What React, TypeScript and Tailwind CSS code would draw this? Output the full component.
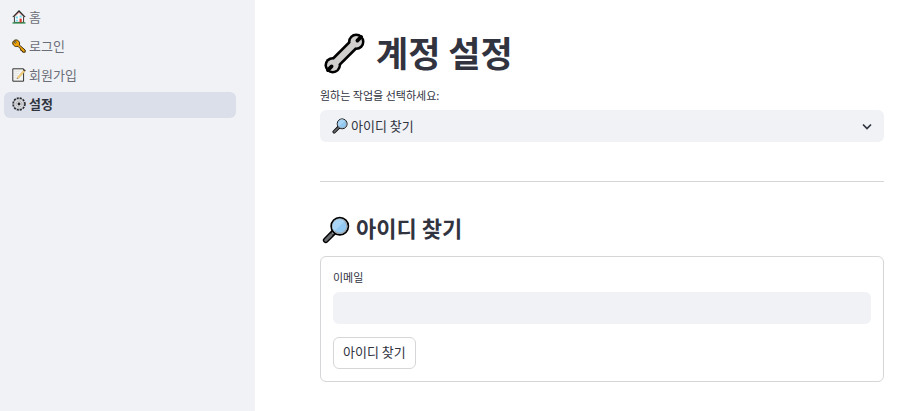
import type { ReactNode } from "react";

type IconProps = { className?: string };

function HouseIcon({ className }: IconProps) {
  return (
    <svg viewBox="0 0 26 26" className={className} aria-hidden="true">
      <path d="M4.500 11.500 13 3l8.500 8.500V23h-17z" fill="#fbfbfc" stroke="#2a2a2a" strokeWidth="1.700" />
      <path d="M5 12.500 13 4.500l8 8" fill="none" stroke="#e27a6b" strokeWidth="1.400" />
      <path d="M1.500 13 13 1.500 24.500 13" fill="none" stroke="#222" strokeWidth="1.900" />
      <path d="M1 24h24" stroke="#2f8a4e" strokeWidth="2.600" />
      <path d="M7 12h4v4H7zM14 10h4v4h-4zM7 18h4v3H7z" fill="#6fdcf0" />
      <path d="M14 16h4v7h-4z" fill="#dd3b2a" />
    </svg>
  );
}

function KeyIcon({ className }: IconProps) {
  return (
    <svg viewBox="0 0 26 26" className={className} aria-hidden="true">
      <path
        d="M3 3.500C5.500 1 10 1 12.500 4c2 2.500 1.800 5 1 7l11 9.500v4h-4.500l-1-2.500-2.500-.5-.5-3-5-5c-3 1-6 .5-8-2C.5 9 1 5.500 3 3.500z"
        fill="#f0a50c"
        stroke="#2c1e00"
        strokeWidth="1.700"
        strokeLinejoin="round"
      />
      <circle cx="6" cy="6" r="1.600" fill="#f0f2f6" stroke="#171000" strokeWidth="1.200" />
    </svg>
  );
}

function MemoIcon({ className }: IconProps) {
  return (
    <svg viewBox="0 0 26 26" className={className} aria-hidden="true">
      <path d="M1.500 1.500h20v23h-20z" fill="#f3f3f2" stroke="#222" strokeWidth="1.700" />
      <path d="M5 6h10M5 10h7M5 14h5M5 18h3" stroke="#dadada" strokeWidth="1.200" />
      <path d="m9.500 17.500 12-13.500 2.500 2.300-12 13.400z" fill="#f7d27a" stroke="#b98f3c" strokeWidth=".6" />
      <path d="m21.500 4 1.500-1.700 2.500 2.300L24 6.300z" fill="#43302c" />
      <path d="m8.500 20.500 1-2.500 2 1.700z" fill="#555" />
    </svg>
  );
}

function GearIcon({ className }: IconProps) {
  return (
    <svg viewBox="0 0 26 26" className={className} aria-hidden="true">
      <circle cx="13" cy="13" r="11" fill="none" stroke="#25272b" strokeWidth="3" strokeDasharray="3.900 1.860" />
      <circle cx="13" cy="13" r="9.300" fill="#dcdddf" stroke="#606266" strokeWidth=".8" />
      <circle cx="13" cy="13" r="5.600" fill="none" stroke="#96989d" strokeWidth="1.600" strokeDasharray="3 1.400" />
      <circle cx="13" cy="13" r="2.600" fill="#202226" />
    </svg>
  );
}

function WrenchIcon({ className }: IconProps) {
  return (
    <svg viewBox="0 0 42 42" className={className} aria-hidden="true">
      <path d="M33 9 9 33" stroke="#000" strokeWidth="12" />
      <circle cx="33" cy="9" r="8.500" fill="#000" />
      <circle cx="9" cy="33" r="8.500" fill="#000" />
      <path d="M33 9 9 33" stroke="#d0cfce" strokeWidth="6.500" />
      <circle cx="33" cy="9" r="5.900" fill="#d0cfce" />
      <circle cx="9" cy="33" r="5.900" fill="#d0cfce" />
      <path d="m38 4-3.800 3.800" stroke="#000" strokeWidth="3.800" strokeLinecap="round" />
      <path d="m4 38 3.800-3.800" stroke="#000" strokeWidth="3.800" strokeLinecap="round" />
    </svg>
  );
}

function SearchIcon({ className }: IconProps) {
  return (
    <svg viewBox="0 0 26 26" className={className} aria-hidden="true">
      <path d="m11 15-7.500 7.500" stroke="#000" strokeWidth="5.400" strokeLinecap="round" />
      <path d="m8.500 17.500-5 5" stroke="#6a6d70" strokeWidth="2.800" strokeLinecap="round" />
      <path d="m11.500 14.500-2 2" stroke="#9b9b9a" strokeWidth="2.200" />
      <circle cx="16.500" cy="9.500" r="8" fill="#8dc3ee" stroke="#000" strokeWidth="1.600" />
      <circle cx="16.500" cy="9.500" r="6.600" fill="#92c9f3" stroke="#a4a8ab" strokeWidth="1.200" />
      <path d="M11.500 14A6.300 6.300 0 0 1 21 5z" fill="#a9d6f7" />
    </svg>
  );
}

function NavItem({ icon, label, active = false }: { icon: ReactNode; label: string; active?: boolean }) {
  return (
    <a
      href="#"
      aria-current={active ? "page" : undefined}
      className={
        "flex h-[26px] items-center gap-[3px] rounded-md px-2 pb-0.5 text-[13px] leading-5 " +
        (active ? "bg-[#dadfe9] font-bold text-[#31333f]" : "text-[#6b6d77]")
      }
    >
      {icon}
      <span>{label}</span>
    </a>
  );
}

export default function App() {
  return (
    <div className="flex min-h-screen bg-white font-['Noto_Sans_CJK_KR','Noto_Sans',sans-serif] text-[#31333f]">
      <aside className="w-[255px] shrink-0 bg-[#f0f2f6] pt-[5px] pr-[19px] pl-1">
        <nav className="flex flex-col gap-[3px]">
          <NavItem icon={<HouseIcon className="size-3.5" />} label="홈" />
          <NavItem icon={<KeyIcon className="size-3.5" />} label="로그인" />
          <NavItem icon={<MemoIcon className="size-3.5" />} label="회원가입" />
          <NavItem icon={<GearIcon className="size-3.5" />} label="설정" active />
        </nav>
      </aside>

      <main className="min-w-0 flex-1 pt-[27px] pr-[13px] pl-[65px]">
        <h1 className="flex h-[50px] items-center gap-[11px] pl-1 text-[35px] font-bold">
          <WrenchIcon className="mt-0.5 size-[41px]" />
          계정 설정
        </h1>

        <label htmlFor="task" className="mt-2.5 block text-[11px] leading-4">
          원하는 작업을 선택하세요:
        </label>
        <div className="relative mt-[7px]">
          <SearchIcon className="pointer-events-none absolute top-2 left-3 size-4" />
          <select
            id="task"
            className="block h-8 w-full appearance-none rounded-md bg-[#f0f2f6] pr-8 pl-[31px] text-[13px]"
          >
            <option>아이디 찾기</option>
          </select>
          <svg
            viewBox="0 0 10 10"
            className="pointer-events-none absolute top-[11px] right-3 size-2.5"
            aria-hidden="true"
          >
            <path d="m1 3.500 4 4 4-4" fill="none" stroke="#31333f" strokeWidth="1.700" />
          </svg>
        </div>

        <hr className="mt-[39px] border-[#d6d6d9]" />

        <h2 className="mt-8 flex h-8 items-center gap-1.5 pb-1.5 pl-0.5 text-[22px] font-bold">
          <SearchIcon className="mt-1.5 size-7" />
          아이디 찾기
        </h2>

        <form
          onSubmit={(event) => event.preventDefault()}
          className="mt-2.5 rounded-md border border-[#d6d6d9] p-3"
        >
          <label htmlFor="email" className="block text-[11px] leading-4">
            이메일
          </label>
          <input id="email" type="email" className="mt-[7px] block h-8 w-full rounded-md bg-[#f0f2f6] px-3 text-[13px]" />
          <button
            type="submit"
            className="mt-[13px] block h-8 rounded-md border border-[#d6d6d9] bg-white px-[9px] pb-0.5 text-[13px]"
          >
            아이디 찾기
          </button>
        </form>
      </main>
    </div>
  );
}
